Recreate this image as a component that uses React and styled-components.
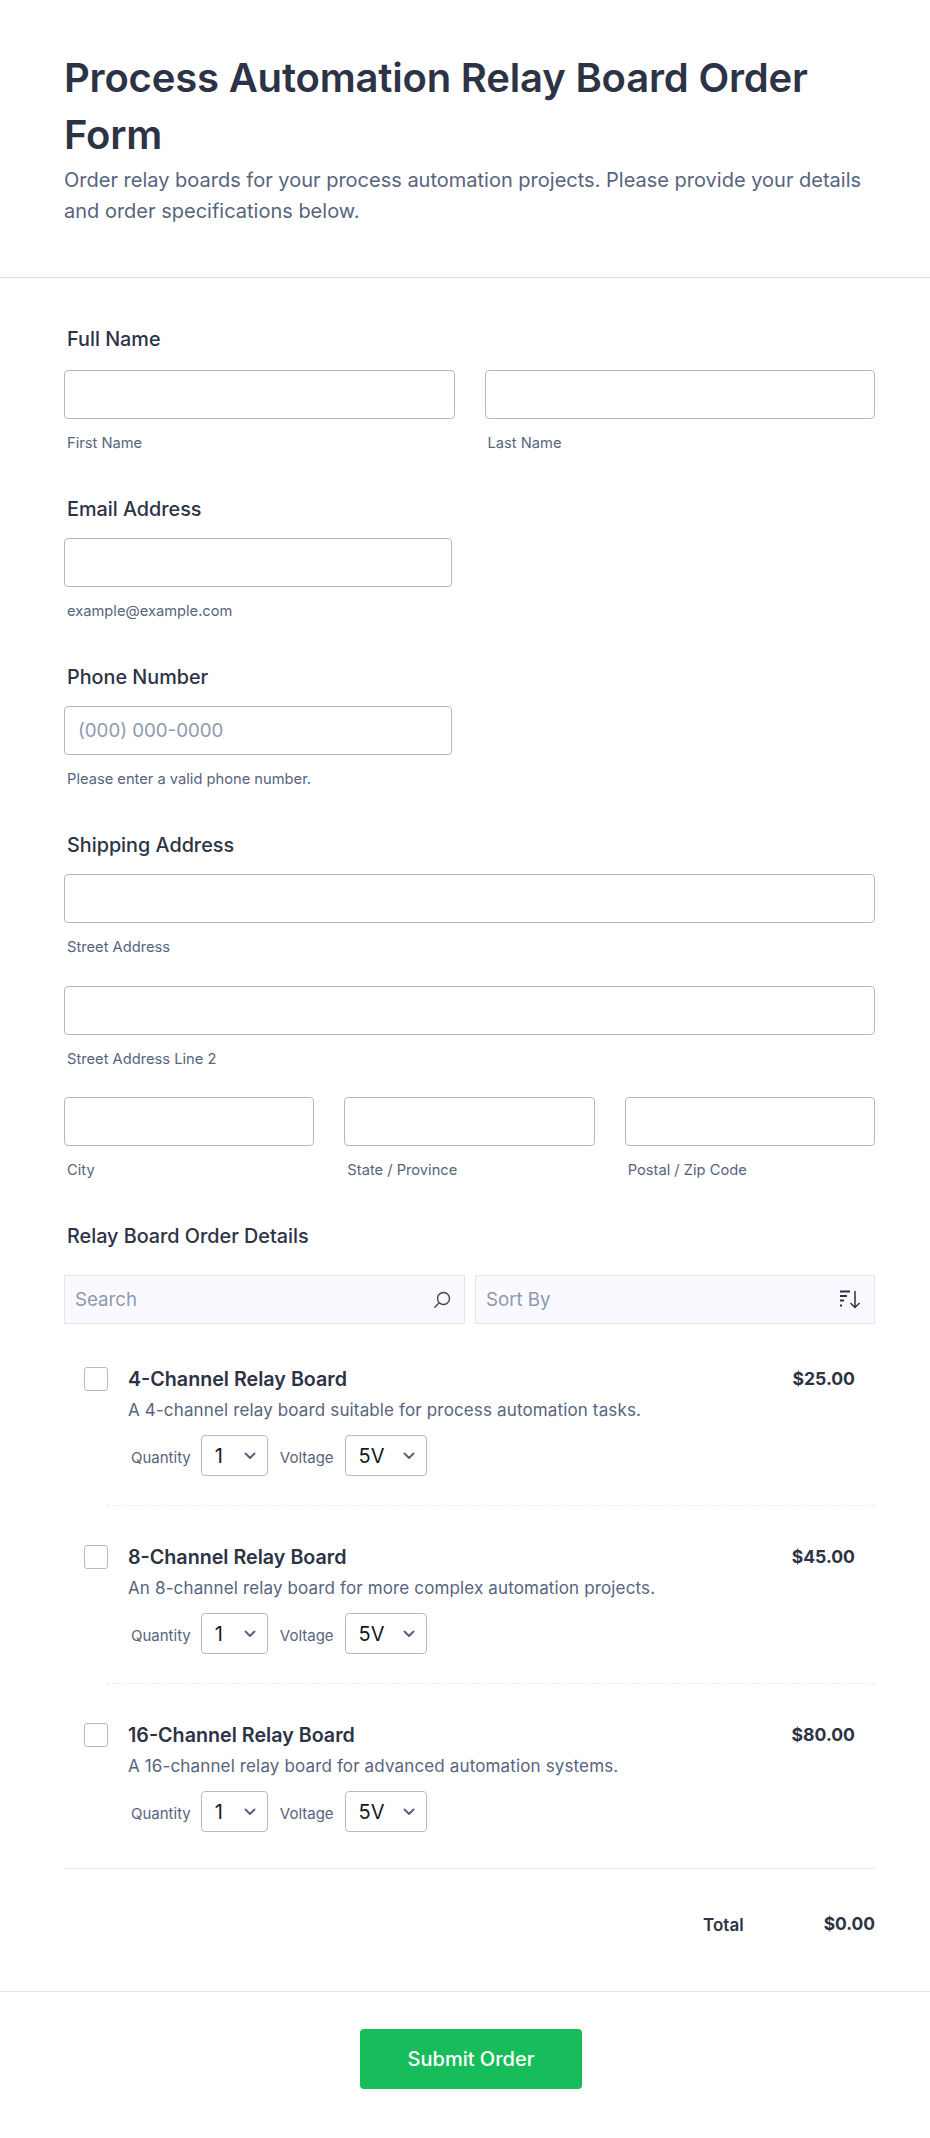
import React from 'react';
import styled, { createGlobalStyle } from 'styled-components';

const GlobalStyle = createGlobalStyle`
  * { box-sizing: border-box; }
  html, body { margin: 0; background: #fff; }
  body { font-family: Inter, "Liberation Sans", sans-serif; color: #2c3345; }
`;

const Page = styled.div`
  width: 930px;
  height: 2138px;
  background: #fff;
`;

const Header = styled.header`
  height: 278px;
  padding: 49px 55px 0 64px;
  border-bottom: 1px solid #d8dae9;
`;

const Title = styled.h1`
  margin: 0;
  font-size: 40px;
  line-height: 57px;
  letter-spacing: -0.18px;
  font-weight: 600;
  color: #2c3345;
`;

const Subtitle = styled.p`
  margin: 2px 0 0;
  font-size: 20px;
  line-height: 31px;
  color: #57647e;
`;

const Form = styled.form`
  padding: 48px 55px 0 64px;
`;

const Section = styled.section`
  margin-bottom: ${p => p.$gap ?? 42}px;
`;

const Label = styled.div`
  margin: 0 0 ${p => p.$gap || 16}px 3px;
  padding-top: ${p => p.$top ?? 1}px;
  font-size: 19.8px;
  line-height: 26px;
  font-weight: 500;
  color: #2c3345;
`;

const Columns = styled.div`
  display: grid;
  grid-template-columns: repeat(${p => p.$count}, 1fr);
  gap: ${p => p.$gap}px;
  margin-bottom: ${p => p.$bottom || 0}px;
`;

const Field = styled.div`
  min-width: 0;
  width: ${p => p.$width ? `${p.$width}px` : 'auto'};
`;

const Input = styled.input`
  display: block;
  width: 100%;
  height: 49px;
  padding: 0 13px;
  border: 1px solid #b4b8cc;
  border-radius: 4px;
  background: #fff;
  font: 400 18.7px Inter, sans-serif;
  color: #2c3345;
  &::placeholder { color: #8d99ad; opacity: 1; }
`;

const Hint = styled.div`
  margin: 14px 0 0 3px;
  font-size: 14.7px;
  line-height: 20px;
  color: #57647e;
`;

const Toolbar = styled.div`
  display: flex;
  gap: 10px;
  margin-bottom: 43px;
`;

const ToolBox = styled.div`
  flex: ${p => p.$grow};
  display: flex;
  align-items: center;
  justify-content: space-between;
  height: 49px;
  padding: 0 13px 0 10px;
  border: 1px solid #e3e5f5;
  background: #f9f9ff;
  font-size: 18.7px;
  color: #8d99ad;
`;

const Item = styled.div`
  display: flex;
  height: ${p => p.$last ? 145 : 178}px;
  padding: 0 20px;
  position: relative;
`;

const Rule = styled.div`
  position: absolute;
  left: 43px;
  right: 0;
  bottom: 39px;
  border-bottom: 1px dashed #eaebf2;
`;

const Check = styled.span`
  flex: none;
  width: 24px;
  height: 24px;
  margin: 0 20px 0 0;
  border: 1px solid #b4b8cc;
  border-radius: 3px;
  background: #fff;
`;

const ItemBody = styled.div`
  flex: 1;
`;

const ItemTitle = styled.div`
  font-size: 19.7px;
  line-height: 24px;
  font-weight: 600;
  color: #2c3345;
`;

const ItemText = styled.div`
  margin-top: 7px;
  font-size: 17px;
  line-height: 24px;
  letter-spacing: 0.14px;
  color: #57647e;
`;

const Options = styled.div`
  display: flex;
  align-items: center;
  margin-top: 13px;
  padding-left: 3px;
`;

const OptionLabel = styled.span`
  margin-right: ${p => p.$gap}px;
  font-size: 15px;
  line-height: 20px;
  padding-top: 5px;
  color: #57647e;
`;

const Select = styled.div`
  display: flex;
  align-items: center;
  justify-content: space-between;
  width: ${p => p.$width}px;
  height: 41px;
  margin-right: 12px;
  padding: 0 11px 0 13px;
  border: 1px solid #b4b8cc;
  border-radius: 4px;
  font-size: 20px;
  color: #141823;
`;

const Price = styled.div`
  font-size: 17.6px;
  line-height: 24px;
  font-weight: 700;
  color: #2c3345;
`;

const TotalRow = styled.div`
  display: flex;
  justify-content: flex-end;
  align-items: center;
  height: 110px;
  border-top: 1px solid #e3e5f0;
  font-size: 17.4px;
  font-weight: 700;
`;

const TotalLabel = styled.span`
  font-size: 17px;
  font-weight: 600;
  margin-right: 80px;
  padding-top: 3px;
`;

const Footer = styled.footer`
  display: flex;
  justify-content: center;
  margin-top: 13px;
  padding: 37px 0 0 12px;
  border-top: 1px solid #e3e5f5;
`;

const Submit = styled.button`
  width: 222px;
  height: 60px;
  border: 0;
  border-radius: 4px;
  background: #18bd5b;
  color: #fff;
  font: 500 20px Inter, sans-serif;
`;

const SearchIcon = () => (
  <svg width="18" height="18" viewBox="0 0 18 18" fill="none" stroke="#3c4559" strokeWidth="1.4" strokeLinecap="round">
    <circle cx="10.5" cy="7.5" r="6" />
    <path d="M6.2 11.8 1.8 16.2" />
  </svg>
);

const SortIcon = () => (
  <svg width="21" height="19" viewBox="0 0 21 19" fill="none" stroke="#2c3345" strokeWidth="2">
    <path d="M0 1.5h10M0 6h7M0 10.5h4M0 15.5h2" />
    <path d="M15 1v16M10.5 13l4.5 4.5 4.5-4.5" strokeWidth="1.5" />
  </svg>
);

const Chevron = () => (
  <svg width="12" height="8" viewBox="0 0 12 8" fill="none" stroke="#57647e" strokeWidth="2" strokeLinecap="round" strokeLinejoin="round">
    <path d="M1.5 1.5 6 6l4.5-4.5" />
  </svg>
);

const products = [
  { name: '4-Channel Relay Board', text: 'A 4-channel relay board suitable for process automation tasks.', price: '$25.00' },
  { name: '8-Channel Relay Board', text: 'An 8-channel relay board for more complex automation projects.', price: '$45.00' },
  { name: '16-Channel Relay Board', text: 'A 16-channel relay board for advanced automation systems.', price: '$80.00' },
];

export default function App() {
  return (
    <Page>
      <GlobalStyle />
      <Header>
        <Title>Process Automation Relay Board Order Form</Title>
        <Subtitle>Order relay boards for your process automation projects. Please provide your details and order specifications below.</Subtitle>
      </Header>
      <Form>
        <Section>
          <Label $top={0} $gap={18}>Full Name</Label>
          <Columns $count={2} $gap={30}>
            <Field><Input /><Hint>First Name</Hint></Field>
            <Field><Input /><Hint>Last Name</Hint></Field>
          </Columns>
        </Section>
        <Section>
          <Label>Email Address</Label>
          <Field $width={388}><Input /><Hint>example@example.com</Hint></Field>
        </Section>
        <Section>
          <Label>Phone Number</Label>
          <Field $width={388}><Input placeholder="(000) 000-0000" /><Hint>Please enter a valid phone number.</Hint></Field>
        </Section>
        <Section $gap={42}>
          <Label>Shipping Address</Label>
          <Columns $count={1} $gap={0} $bottom={29}>
            <Field><Input /><Hint>Street Address</Hint></Field>
          </Columns>
          <Columns $count={1} $gap={0} $bottom={28}>
            <Field><Input /><Hint>Street Address Line 2</Hint></Field>
          </Columns>
          <Columns $count={3} $gap={30}>
            <Field><Input /><Hint>City</Hint></Field>
            <Field><Input /><Hint>State / Province</Hint></Field>
            <Field><Input /><Hint>Postal / Zip Code</Hint></Field>
          </Columns>
        </Section>
        <Section $gap={0}>
          <Label $gap={26}>Relay Board Order Details</Label>
          <Toolbar>
            <ToolBox $grow={401}>Search<SearchIcon /></ToolBox>
            <ToolBox $grow={400}>Sort By<SortIcon /></ToolBox>
          </Toolbar>
          {products.map((product, i) => (
            <Item key={product.name} $last={i === products.length - 1}>
              <Check />
              <ItemBody>
                <ItemTitle>{product.name}</ItemTitle>
                <ItemText>{product.text}</ItemText>
                <Options>
                  <OptionLabel $gap={10}>Quantity</OptionLabel>
                  <Select $width={67}>1<Chevron /></Select>
                  <OptionLabel $gap={11}>Voltage</OptionLabel>
                  <Select $width={82}>5V<Chevron /></Select>
                </Options>
              </ItemBody>
              <Price>{product.price}</Price>
              {i < products.length - 1 && <Rule />}
            </Item>
          ))}
          <TotalRow>
            <TotalLabel>Total</TotalLabel>
            $0.00
          </TotalRow>
        </Section>
      </Form>
      <Footer>
        <Submit type="button">Submit Order</Submit>
      </Footer>
    </Page>
  );
}
